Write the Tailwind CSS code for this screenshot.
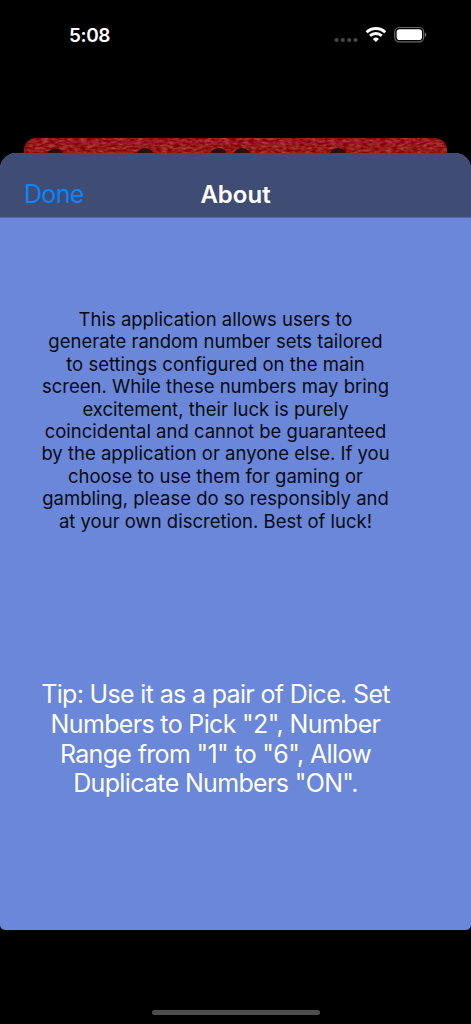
<!DOCTYPE html>
<html lang="en">
<head>
  <meta charset="UTF-8" />
  <meta name="viewport" content="width=device-width, initial-scale=1.0" />
  <title>About</title>
  <script src="https://cdn.jsdelivr.net/npm/@tailwindcss/browser@4"></script>
</head>
<body class="bg-black font-['Inter',sans-serif]">
<div class="w-[471px] h-[1024px] bg-black overflow-hidden flex flex-col">

  <!-- status bar -->
  <header class="h-[138px] shrink-0 pt-[23px] pl-[69px] pr-[43px] flex items-start justify-between">
    <span class="text-[19px] leading-[25px] font-semibold tracking-[-0.4px] text-white">5:08</span>
    <div class="flex items-start">
      <svg class="w-[26px] h-[26px]" viewBox="0 0 26 26" fill="#474747">
        <circle cx="3.5" cy="17" r="2.1"/><circle cx="9.8" cy="17" r="2.1"/><circle cx="16.2" cy="17" r="2.1"/><circle cx="22.6" cy="17" r="2.1"/>
      </svg>
      <svg class="w-[22px] h-[22px] ml-[6px]" viewBox="0 0 22 22" fill="none" stroke="#fff" stroke-width="2.9">
        <path d="M1.6 9.2a13.4 13.4 0 0 1 18.6 0"/>
        <path d="M5 12.8a8.6 8.6 0 0 1 11.8 0"/>
        <path d="M10.9 19l-3-3.1a4.3 4.3 0 0 1 6 0z" fill="#fff" stroke="none"/>
      </svg>
      <svg class="w-[34px] h-[22px] ml-[7px]" viewBox="0 0 34 22">
        <rect x=".7" y="4.500" width="29" height="14.4" rx="4.6" fill="none" stroke="#6b6b6b" stroke-width="1.2"/>
        <rect x="2.6" y="6.3" width="25.4" height="10.8" rx="3.1" fill="#fff"/>
        <path d="M31 9.4c1.9.8 1.9 3.9 0 4.7z" fill="#777"/>
      </svg>
    </div>
  </header>

  <!-- top edge of the main screen, behind the sheet -->
  <svg class="w-[423px] h-[30px] -mb-[15px] mx-auto shrink-0 rounded-t-[12px]" viewBox="0 0 423 30">
    <filter id="cloth" x="0" y="0" width="100%" height="100%" color-interpolation-filters="sRGB">
      <feTurbulence type="fractalNoise" baseFrequency="0.16 0.42" numOctaves="3" seed="4"/>
      <feColorMatrix values="0.25 0 0 0 0.46  0.5 0 0 0 -0.14  0.4 0 0 0 -0.1  0 0 0 0 1"/>
    </filter>
    <rect width="423" height="30" filter="url(#cloth)"/>
    <g fill="#2c0d10">
      <circle cx="31" cy="20" r="9.5"/><circle cx="121" cy="19.5" r="9.5"/><circle cx="194.5" cy="19.5" r="9.5"/>
      <circle cx="218" cy="19.5" r="9.5"/><circle cx="314" cy="19.5" r="9.5"/>
    </g>
  </svg>

  <!-- about sheet -->
  <main class="relative h-[777px] shrink-0 rounded-t-[16px] rounded-b-[5px] overflow-hidden bg-[#6a87d9]">
    <nav class="h-[65px] bg-[#3f4c73] border-b border-[#56699f] pt-[26px] px-6 grid grid-cols-[1fr_auto_1fr] items-start">
      <button class="text-left text-[25px] leading-[31px] tracking-[-0.7px] text-[#0a84ff]">Done</button>
      <h1 class="text-[24px] leading-[32px] font-semibold text-white">About</h1>
    </nav>

    <p class="mt-[90px] w-[431px] text-center text-[18.5px] leading-[22.4px] text-[#080a12] whitespace-nowrap">
      This application allows users to<br>
      generate random number sets tailored<br>
      to settings configured on the main<br>
      screen. While these numbers may bring<br>
      excitement, their luck is purely<br>
      coincidental and cannot be guaranteed<br>
      by the application or anyone else. If you<br>
      choose to use them for gaming or<br>
      gambling, please do so responsibly and<br>
      at your own discretion. Best of luck!
    </p>

    <p class="mt-[148px] w-[431px] text-center text-[25px] leading-[29.8px] tracking-[-0.66px] text-white whitespace-nowrap">
      Tip: Use it as a pair of Dice. Set<br>
      Numbers to Pick "2", Number<br>
      Range from "1" to "6", Allow<br>
      Duplicate Numbers "ON".
    </p>
  </main>

  <!-- home indicator -->
  <div class="mt-[80px] mx-auto w-[168px] h-[5px] shrink-0 rounded-full bg-[#4d4d4d]"></div>
</div>
</body>
</html>
